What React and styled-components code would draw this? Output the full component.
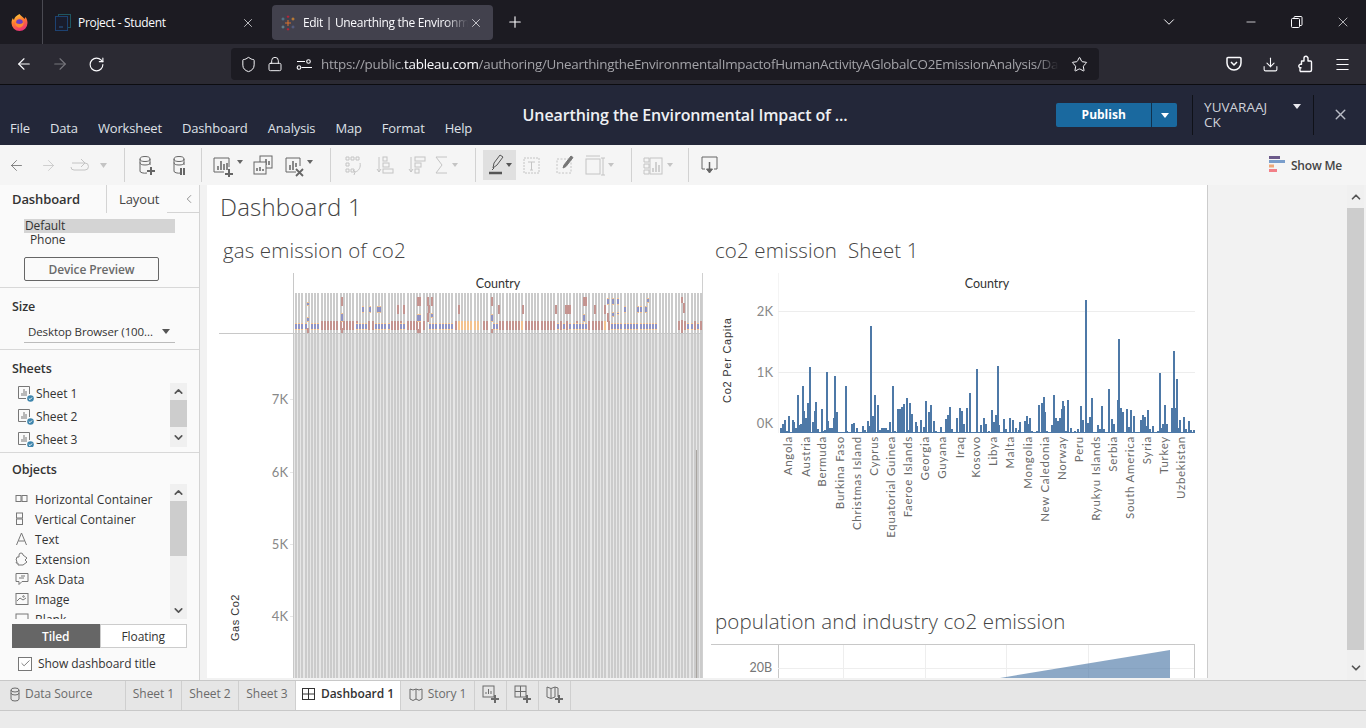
import React from 'react';
import styled, { createGlobalStyle } from 'styled-components';
import { ArrowLeft, ArrowRight, RotateCw, Lock, Star, Download, Menu, X, Plus, ChevronDown, ChevronUp, Minus, Shield, ChevronLeft, Check } from 'lucide-react';

const Global = createGlobalStyle`
  html, body { margin: 0; padding: 0; width: 1366px; height: 728px; overflow: hidden; background: #ebebeb; }
  * { box-sizing: border-box; }
  body { font-family: "Open Sans", "Noto Sans", sans-serif; }
`;
const Page = styled.div`width:1366px;height:728px;display:flex;flex-direction:column;overflow:hidden;`;

/* ---------- browser chrome ---------- */
const TabStrip = styled.div`height:44px;background:#1c1b22;display:flex;align-items:center;color:#fbfbfe;flex:none;`;
const FoxSlot = styled.div`width:43px;height:44px;border-right:1px solid #4a4a52;display:flex;align-items:center;justify-content:center;padding-right:3px;`;
const BrowserTab = styled.div`
  height:35px;margin-top:1px;display:flex;align-items:center;border-radius:4px;flex:none;
  width:${p => p.$w}px;margin-left:${p => p.$ml || 0}px;padding:0 10px 0 ${p => p.$pl}px;
  background:${p => p.$active ? '#42414d' : 'transparent'};gap:${p => p.$active ? 7 : 7}px;
`;
const TabTitle = styled.span`
  font-size:12px;white-space:nowrap;overflow:hidden;flex:1;letter-spacing:-0.32px;
  ${p => p.$fade && 'margin-right:-6px;mask-image:linear-gradient(90deg,#000 86%,transparent 100%);'}
`;
const WinControls = styled.div`margin-left:auto;display:flex;align-items:center;`;
const WinBtn = styled.div`width:${p => p.$w}px;display:flex;justify-content:center;`;
const NavBar = styled.div`height:41px;background:#2b2a33;border-bottom:1px solid #0c0c10;display:flex;align-items:center;flex:none;color:#fbfbfe;`;
const NavBtn = styled.div`width:36px;display:flex;justify-content:center;color:${p => p.$off ? '#77767d' : '#fbfbfe'};margin-left:${p => p.$ml || 0}px;`;
const UrlBar = styled.div`
  width:868px;height:32px;margin-left:117px;background:#1c1b22;border-radius:4px;display:flex;align-items:center;padding:0 8px;flex:none;
`;
const UrlIcon = styled.div`width:${p => p.$w}px;display:flex;justify-content:center;flex:none;color:#fbfbfe;margin-left:${p => p.$ml || 0}px;`;
const UrlText = styled.div`
  width:742px;margin-left:6px;font-size:13.4px;white-space:nowrap;overflow:hidden;color:#a3a3a8;letter-spacing:-0.26px;
  mask-image:linear-gradient(90deg,#000 97%,transparent 100%);
  b{font-weight:400;color:#fbfbfe;}
`;
const NavRight = styled.div`margin-left:auto;display:flex;align-items:center;padding-right:6px;`;

/* ---------- tableau header ---------- */
const AppHeader = styled.div`height:60px;background:#232739;display:flex;flex:none;position:relative;color:#e8e9ee;`;
const MenuRow = styled.div`display:flex;align-items:center;gap:20px;padding:26px 0 0 10px;width:523px;`;
const MenuItem = styled.span`font-size:13px;color:#dfe1e7;letter-spacing:-0.15px;`;
const WorkbookTitle = styled.div`width:533px;font-size:16px;font-weight:600;color:#eef0f3;padding-top:19px;letter-spacing:-0.12px;white-space:nowrap;`;
const PublishWrap = styled.div`display:flex;height:24px;margin:18px 0 0 1px;width:121px;border-radius:2px;overflow:hidden;`;
const PublishBtn = styled.div`width:96px;background:#1a699f;color:#fff;font-weight:700;font-size:12px;display:flex;align-items:center;justify-content:center;border-right:1px solid #10324e;padding-bottom:1px;`;
const PublishCaret = styled.div`flex:1;background:#1a699f;display:flex;align-items:center;justify-content:center;`;
const Tri = styled.span`
  display:block;width:0;height:0;border-left:${p => p.$s}px solid transparent;border-right:${p => p.$s}px solid transparent;
  border-top:${p => p.$s + 1}px solid ${p => p.$c};
`;
const UserBox = styled.div`
  margin:10px 0 10px 15px;width:122px;border-left:1px solid #0f1118;border-right:1px solid #0f1118;padding:5px 12px 5px 11px;display:flex;
  font-size:13.5px;line-height:15px;color:#cfd2da;justify-content:space-between;
`;
const UserCaret = styled(Tri)`margin-top:4px;`;
const CloseBox = styled.div`width:52px;display:flex;align-items:center;justify-content:center;color:#b9bcc6;padding-bottom:2px;`;

/* ---------- toolbar ---------- */
const Toolbar = styled.div`height:40px;background:#f5f5f5;display:flex;align-items:center;flex:none;`;
const ToolSep = styled.div`width:1px;height:34px;background:#d2d2d2;flex:none;margin-left:${p => p.$ml || 0}px;`;
const ToolBtn = styled.div`
  width:${p => p.$w || 32}px;height:30px;display:flex;align-items:center;justify-content:center;flex:none;margin-left:${p => p.$ml || 0}px;
  background:${p => p.$on ? '#e0e0e0' : 'transparent'};color:${p => p.$on ? '#555' : p.$off ? '#c4c4c4' : '#666'};
`;
const ShowMe = styled.div`margin-left:auto;display:flex;align-items:center;gap:6px;padding-right:24px;font-size:12px;font-weight:600;color:#444;letter-spacing:-0.2px;`;

/* ---------- main ---------- */
const Main = styled.div`height:495px;display:flex;flex:none;background:#f2f2f2;overflow:hidden;`;
const Side = styled.div`width:200px;background:#fafafa;border-right:1px solid #d4d4d4;flex:none;display:flex;flex-direction:column;color:#333;font-size:12px;`;
const SideTabs = styled.div`height:28px;display:flex;flex:none;border-bottom:1px solid #d4d4d4;`;
const SideTab = styled.div`
  height:28px;display:flex;align-items:center;font-size:13px;padding-left:${p => p.$pl}px;width:${p => p.$w}px;
  font-weight:${p => p.$on ? 600 : 400};color:${p => p.$on ? '#333' : '#444'};
  border-right:${p => p.$on ? '1px solid #d4d4d4' : 'none'};
  background:#fafafa;margin-bottom:${p => p.$on ? '-1px' : 0};letter-spacing:-0.1px;
`;
const TabCollapse = styled.div`margin-left:auto;display:flex;align-items:center;color:#666;padding-right:3px;`;
const Section = styled.div`
  flex:none;height:${p => p.$h}px;padding:${p => p.$p};position:relative;
  border-bottom:${p => p.$last ? 'none' : '1px solid #d8d8d8'};
`;
const SectionLabel = styled.div`font-size:12.5px;font-weight:600;color:#333;line-height:16px;padding-left:12px;letter-spacing:-0.1px;`;
const DeviceRow = styled.div`
  margin-left:24px;width:151px;height:14px;font-size:12px;line-height:14px;letter-spacing:-0.1px;
  background:${p => p.$on ? '#d4d4d4' : 'transparent'};padding-left:${p => p.$on ? 1 : 6}px;color:#333;
`;
const DeviceBtn = styled.div`
  margin:10px 0 0 24px;width:135px;height:24px;border:1px solid #666;border-radius:2px;display:flex;align-items:center;justify-content:center;
  color:#6a6a6a;font-size:12px;font-weight:600;letter-spacing:-0.1px;
`;
const SelectRow = styled.div`
  margin:7px 0 0 24px;width:151px;height:21px;border-bottom:1px solid #bbb;display:flex;align-items:center;justify-content:space-between;
  padding:0 5px 2px 4px;font-size:11.5px;white-space:nowrap;letter-spacing:-0.1px;
`;
const ListWrap = styled.div`display:flex;margin-top:${p => p.$mt}px;height:${p => p.$h}px;overflow:hidden;`;
const List = styled.div`width:170px;flex:none;overflow:hidden;padding-left:${p => p.$pl}px;padding-top:${p => p.$pt || 0}px;`;
const SheetRow = styled.div`height:23px;display:flex;align-items:center;gap:2px;font-size:12px;color:#333;letter-spacing:-0.05px;&:first-child{margin-top:-1px;}`;
const ObjectRow = styled.div`height:20px;display:flex;align-items:center;gap:6px;font-size:12px;color:#333;letter-spacing:0.05px;white-space:nowrap;`;
const VScroll = styled.div`width:${p => p.$w}px;flex:none;background:#f0f0f0;display:flex;flex-direction:column;`;
const ScrollEnd = styled.div`height:${p => p.$h}px;display:flex;align-items:center;justify-content:center;color:#555;flex:none;`;
const ScrollThumb = styled.div`height:${p => p.$h}px;background:#cdcdcd;flex:none;`;
const ScrollFill = styled.div`flex:1;`;
const ToggleRow = styled.div`display:flex;margin:5px 0 0 12px;width:175px;height:24px;`;
const ToggleBtn = styled.div`
  flex:1;display:flex;align-items:center;justify-content:center;font-size:12px;letter-spacing:-0.1px;
  background:${p => p.$on ? '#666' : '#fff'};color:${p => p.$on ? '#fff' : '#333'};font-weight:${p => p.$on ? 600 : 400};
  border:1px solid ${p => p.$on ? '#666' : '#ccc'};
`;
const CheckRow = styled.div`display:flex;align-items:center;gap:6px;margin:7px 0 0 18px;font-size:12px;color:#333;letter-spacing:-0.05px;`;
const CheckBox = styled.div`width:14px;height:14px;border:1px solid #777;background:#fff;display:flex;align-items:center;justify-content:center;color:#444;`;

const Gutter = styled.div`width:7px;flex:none;`;
const Canvas = styled.div`width:1000px;height:493px;flex:none;background:#fff;overflow:hidden;padding-left:12px;`;
const DashTitle = styled.div`height:44px;display:flex;align-items:center;font-size:24px;font-weight:300;color:#444;padding:0 0 2px 1px;letter-spacing:.2px;`;
const Columns = styled.div`display:flex;`;
const ChartCol = styled.div`width:${p => p.$w}px;flex:none;`;
const PanelTitle = styled.div`height:44px;display:flex;align-items:center;font-size:20.5px;font-weight:300;color:#444;padding:0 0 2px ${p => p.$pl}px;white-space:pre;letter-spacing:.12px;`;
const ChartSvg = styled.svg`display:block;`;
const Margin = styled.div`width:140px;height:493px;flex:none;border-left:1px solid #ccc;`;
const PageScroll = styled.div`width:17px;flex:none;background:#f0f0f0;display:flex;flex-direction:column;`;

/* ---------- sheet tabs ---------- */
const SheetBar = styled.div`height:31px;background:#e6e6e6;border-top:1px solid #c8c8c8;border-bottom:1px solid #c8c8c8;display:flex;flex:none;`;
const SheetTab = styled.div`
  height:29px;display:flex;align-items:center;justify-content:${p => p.$left ? 'flex-start' : 'center'};gap:${p => p.$left ? 4 : 5}px;font-size:12px;width:${p => p.$w}px;flex:none;
  padding:0 0 4px ${p => p.$left ? 9 : 0}px;
  border-right:1px solid #cfcfcf;color:${p => p.$on ? '#333' : '#6b6b6b'};background:${p => p.$on ? '#fff' : 'transparent'};
  font-weight:${p => p.$on ? 600 : 400};letter-spacing:-0.05px;
`;
const StatusBar = styled.div`flex:1;background:#ebebeb;`;

/* ---------- icons ---------- */
const S = ({ w = 20, h = 20, vb, children, sw = 1, fill = 'none' }) => (
  <svg width={w} height={h} viewBox={vb || `0 0 ${w} ${h}`} fill={fill} stroke="currentColor" strokeWidth={sw} style={{ overflow: 'visible', display: 'block' }}>{children}</svg>
);
const Caret = ({ x, y = 9 }) => <path d={`M${x} ${y}h6l-3 4z`} fill="currentColor" stroke="none" />;

const FoxLogo = () => (
  <svg width="17" height="18" viewBox="0 0 16 18">
    <defs>
      <linearGradient id="fx" x1="0.2" y1="0" x2="0.6" y2="1"><stop offset="0" stopColor="#ffd23f" /><stop offset=".45" stopColor="#ff7a2f" /><stop offset="1" stopColor="#ea2f7b" /></linearGradient>
    </defs>
    <path d="M8 1c1 2 4 3 5 5l1-2c1.500 2 2 4 2 6a8 8 0 0 1-16 0c0-2 .6-4 1.500-5 0 1 .5 1.500 1 2C3 4 5 2.500 8 1z" fill="url(#fx)" />
    <circle cx="8" cy="9.500" r="3.300" fill="#6a3fc4" />
    <path d="M3.500 9c1 1 2.500 2 4.500 2 2 0 3-1 4-2 .5 3-1.500 5.500-4 5.500S3 12 3.500 9z" fill="#ff8a30" />
  </svg>
);
const ProjectIcon = () => (
  <svg width="16" height="17" viewBox="0 0 16 17" fill="none">
    <rect x="3.500" y=".5" width="12" height="13" stroke="#1f5560" />
    <rect x=".5" y="2.500" width="12" height="14" stroke="#1d4272" fill="#191c2c" />
    <path d="M4 13h4" stroke="#2a5a92" />
  </svg>
);
const TableauLogo = () => (
  <svg width="16" height="16" viewBox="0 0 16 16" strokeWidth=".9">
    <path d="M8 5v6M5 8h6" stroke="#e8762b" />
    <path d="M3 2.500v3M1.500 4h3" stroke="#5b879b" />
    <path d="M13 2.500v3M11.500 4h3" stroke="#eb912b" />
    <path d="M3 10.500v3M1.500 12h3" stroke="#7099a6" />
    <path d="M13 10.500v3M11.500 12h3" stroke="#5c6692" />
    <path d="M8 .5v2.500M6.800 1.700h2.500" stroke="#c72035" />
    <path d="M8 13v2.500M6.800 14.300h2.500" stroke="#c72035" />
  </svg>
);
const Restore = () => (
  <S w={12} h={12}><rect x=".5" y="2.500" width="8" height="9" rx="1" /><path d="M3 2.500V1.500a1 1 0 0 1 1-1h6a1 1 0 0 1 1 1v7a1 1 0 0 1-1 1H8.500" /></S>
);
const Sliders = () => (
  <S w={15} h={11} sw={1.100}><path d="M0 2.500h8M4.500 8.500H15" /><circle cx="11.500" cy="2.500" r="1.800" /><circle cx="2" cy="8.500" r="1.800" /></S>
);
const Pocket = () => (
  <svg width="16" height="16" viewBox="0 0 16 16" fill="none" stroke="currentColor" strokeWidth="1.500"><path d="M2 1.500h12a1 1 0 0 1 1 1V7a7 7 0 0 1-14 0V2.500a1 1 0 0 1 1-1z" /><path d="M5 6l3 3 3-3" /></svg>
);
const ExtPuzzle = () => (
  <svg width="16" height="18" viewBox="0 0 16 18" fill="none" stroke="currentColor" strokeWidth="1.400" strokeLinejoin="round">
    <path d="M2 16.500h10a1.500 1.500 0 0 0 1.500-1.500V7a1 1 0 0 0-1-1H10V3.300a2 2 0 0 0-4 0V6H3.500v3.300H2a1.800 1.800 0 0 0 0 3.400h1.500" />
    <path d="M2 16.500V12.700" />
  </svg>
);
const Cyl = ({ x = 0 }) => <g transform={`translate(${x} 0)`}><ellipse cx="6" cy="5" rx="5" ry="2.500" /><path d="M1 5v12a5 2 0 0 0 7 2M11 5v6M1 8.500a5 2.500 0 0 0 10 0" /></g>;
const DataAdd = () => <S h={22} w={20}><Cyl x={2} /><path d="M14 13v8M10 17h8" strokeWidth="2" /></S>;
const DataPause = () => <S h={22} w={20}><Cyl x={4} /><path d="M12 14v7M15 14v7" strokeWidth="2" /></S>;
const NewSheet = () => (
  <S w={32} h={22}><path d="M15 18H5V4h15v9" /><path d="M9 16v-4M12 16V7M15 16v-6M18 16V9" strokeWidth="1.500" /><path d="M16 20h8M20 15v8" strokeWidth="2" /><Caret x={28} y={6} /></S>
);
const DupSheet = () => (
  <S w={24} h={22}><rect x="9" y="2" width="12" height="12" fill="#f5f5f5" /><path d="M12 11V8M15 11V5M18 11V7" strokeWidth="1.500" /><rect x="3" y="8" width="12" height="12" fill="#f5f5f5" /><path d="M6 17v-3M9 17v-4M12 17v-2" strokeWidth="1.500" /></S>
);
const ClearSheet = () => (
  <S w={32} h={22}><path d="M15 18H5V4h14v8" /><path d="M9 16v-5M12 16V7M15 13V9" strokeWidth="1.500" /><path d="M15 15l7 7M22 15l-7 7" strokeWidth="1.800" /><Caret x={26} y={6} /></S>
);
const Swap = () => (
  <S w={22} h={22}><path d="M4 3h3v3H4zM9 3h3v3H9zM14 3h3v3h-3zM4 9h3v3H4zM4 15h3v3H4zM9 15h3v3H9z" /><path d="M18 9c1 4-1 8-5 9" /><path d="M11 16l2 2-1 3" /></S>
);
const SortA = () => (
  <S w={22} h={22}><path d="M4 3v15M2 15l2 3 2-3" /><rect x="8" y="3" width="4" height="4" /><rect x="8" y="9" width="6" height="4" /><rect x="8" y="15" width="10" height="4" /></S>
);
const SortD = () => (
  <S w={22} h={22}><path d="M4 3v15M2 15l2 3 2-3" /><rect x="8" y="3" width="10" height="4" /><rect x="8" y="9" width="6" height="4" /><rect x="8" y="15" width="4" height="4" /></S>
);
const Sigma = () => <S w={32} h={22}><path d="M16 3H5l6 8-6 8h11" /><Caret x={21} y={9} /></S>;
const Pen = () => (
  <S w={30} h={24}><path d="M8 15l1-5 6-8 3 2-6 8zM7 17l2-2" /><path d="M4 20h13" strokeWidth="2.500" /><Caret x={21} y={10} /></S>
);
const LabelT = () => <S w={22} h={22}><rect x="3" y="4" width="15" height="15" strokeDasharray="2 1" /><path d="M7 8h7M10.500 8v8M9 16h3" /></S>;
const Fit = () => (
  <S w={22} h={22}><rect x="3" y="5" width="14" height="14" strokeDasharray="2 1.500" /><path d="M9 14l1-3 7-9 2 1.500-7 9z" fill="#777" stroke="#777" /></S>
);
const FixAxes = () => (
  <S w={32} h={22}><rect x="3" y="5" width="14" height="15" /><path d="M3 2h14M20 4v17M18 4h4M18 21h4" /><Caret x={25} y={9} /></S>
);
const ShowCards = () => (
  <S w={32} h={22}><path d="M3 4h5v4H3zM3 10h5v4H3zM3 16h5v4H3z" /><rect x="9" y="4" width="12" height="16" /><path d="M12 18v-4M15 18V8M18 18v-7" strokeWidth="1.500" /><Caret x={26} y={9} /></S>
);
const Share = () => (
  <S w={22} h={22}><path d="M6 15H3V3h15v12h-3" /><path d="M10.500 8v9" strokeWidth="1.500" /><path d="M7.500 15h6l-3 4z" fill="currentColor" /></S>
);
const ShowMeIcon = () => (
  <svg width="16" height="20" viewBox="0 0 16 20"><rect x="0" y="1" width="11" height="3" fill="#6c5a8a" /><rect x="0" y="5" width="16" height="3" fill="#7a9ecb" /><rect x="0" y="9.500" width="5" height="3" fill="#f0a878" /><rect x="0" y="14" width="8" height="3" fill="#f28088" /></svg>
);
const SheetIcon = () => (
  <svg width="16" height="16" viewBox="0 0 16 16" fill="none" stroke="#777" style={{ flex: 'none' }}>
    <path d="M8 12.500H.5V.5h11V8" /><path d="M4 10V7M6 10V3M8 10V5" />
    <circle cx="12.500" cy="12.500" r="3.300" fill="#3f86ad" stroke="none" /><path d="M10.800 12.500l1.200 1.200 2-2.200" stroke="#fff" />
  </svg>
);
const ObjIcon = ({ k }) => (
  <svg width="14" height="14" viewBox="0 0 14 14" fill="none" stroke="#777" style={{ flex: 'none', overflow: 'visible' }}>
    {k === 'h' && <><rect x="1" y="3.500" width="5" height="6" /><rect x="7" y="3.500" width="5" height="6" /></>}
    {k === 'v' && <><rect x="1.500" y="1" width="6" height="5" /><rect x="1.500" y="7" width="6" height="5.500" /></>}
    {k === 't' && <path d="M1.500 13L6.500 1l5 12M3.500 9h6" />}
    {k === 'e' && <path d="M2 5h2V3a2 2 0 0 1 4 0l4 3-2 2 2 2-4 3H3v-2H1l1-2-1-1z" />}
    {k === 'a' && <path d="M1 1.500h12v8H7l-3 3v-3H1zM4 6h5M6 4h4" />}
    {k === 'i' && <><rect x="1" y="1.500" width="12" height="11" /><path d="M2 9l3-3 3 2 3-2" /><circle cx="8.500" cy="4.500" r=".8" /></>}
    {k === 'b' && <rect x="1" y="2" width="12" height="11" />}
  </svg>
);
const SmallSheetAdd = ({ k }) => (
  <S w={20} h={20}>
    {k === 's' && <><rect x="2" y="2" width="11" height="11" /><path d="M5 10V8M7.500 10V5M10 10V7" /></>}
    {k === 'd' && <><rect x="2" y="2" width="11" height="11" /><path d="M2 7.500h11M7.500 2v11" /></>}
    {k === 'b' && <path d="M2 3l4 1.500L10 3v10l-4 1.500L2 13zM6 4.500v10M10 3l3 1v9" />}
    <path d="M10 15h8M14 11v8" strokeWidth="2" />
  </S>
);

/* ---------- chart data ---------- */
const TOP = [[212,475],[218,462],[224,450],[230,483],[237,438],[248,450],[253,455],[258,474],[264,375],[270,464],[273,462],[279,348],[283,424],[288,444],[295,399],[300,291],[309,455],[315,423],[318,396],[324,477],[336,417],[342,482],[345,480],[351,306],[355,453],[360,474],[366,474],[372,444],[375,318],[381,426],[396,485],[408,348],[411,484],[426,462],[432,459],[441,474],[447,485],[459,468],[465,480],[474,453],[477,468],[483,168],[489,438],[495,375],[504,405],[510,480],[516,474],[522,474],[528,474],[534,480],[540,456],[549,348],[555,482],[564,417],[570,417],[576,411],[582,402],[590,384],[594,480],[600,399],[606,432],[618,456],[621,468],[633,450],[642,472],[648,393],[657,426],[663,405],[672,453],[678,483],[684,486],[693,471],[708,447],[714,435],[720,411],[726,477],[741,444],[750,414],[756,423],[762,462],[771,414],[780,369],[786,486],[792,486],[801,297],[813,465],[822,444],[828,462],[838,484],[846,420],[852,456],[858,435],[864,288],[868,465],[882,447],[888,477],[900,444],[909,450],[918,474],[927,480],[930,456],[945,453],[951,438],[957,462],[960,444],[966,482],[975,486],[981,483],[987,405],[996,399],[1002,381],[1006,426],[1011,484],[1026,465],[1032,375],[1038,444],[1044,453],[1050,444],[1056,417],[1059,393],[1062,408],[1068,482],[1074,390],[1083,474],[1095,483],[1104,477],[1113,408],[1119,450],[1128,90],[1134,459],[1140,441],[1146,384],[1164,465],[1170,477],[1176,408],[1182,477],[1197,357],[1206,447],[1212,462],[1223,390],[1227,207],[1233,414],[1238,426],[1251,417],[1257,471],[1263,420],[1272,438],[1293,450],[1299,435],[1305,441],[1311,468],[1314,420],[1320,477],[1329,468],[1343,483],[1350,309],[1356,474],[1360,462],[1365,405],[1371,462],[1386,414],[1392,243],[1395,414],[1401,327],[1407,474],[1410,450],[1422,441],[1428,477],[1437,453],[1443,480],[1452,480]];
const COUNTRIES = [['Angola',235],['Austria',287],['Bermuda',337],['Burkina Faso',390],['Christmas Island',441],['Cyprus',492],['Equatorial Guinea',543],['Faeroe Islands',594],['Georgia',645],['Guyana',695],['Iraq',750],['Kosovo',797],['Libya',850],['Malta',900],['Mongolia',953],['New Caledonia',1005],['Norway',1056],['Peru',1107],['Ryukyu Islands',1158],['Serbia',1210],['South America',1260],['Syria',1311],['Turkey',1362],['Uzbekistan',1412]];
const SEGS = [[252,285,'b'],[300,330,'b'],[336,390,'r'],[402,438,'r'],[440,470,'b'],[472,500,'m'],[505,540,'b'],[545,570,'r'],[572,585,'b'],[590,615,'r'],[617,645,'r'],[655,665,'b'],[670,730,'b'],[735,745,'r'],[746,800,'o'],[815,835,'r'],[845,860,'b'],[865,935,'r'],[936,942,'o'],[945,1032,'r'],[1035,1060,'m'],[1070,1098,'m'],[1100,1128,'b'],[1130,1180,'r'],[1182,1188,'o'],[1195,1210,'m'],[1215,1300,'b'],[1305,1335,'b'],[1405,1470,'m']];
const MARKS = [[292,97,108,'b'],[292,140,155,'b'],[292,175,190,'r'],[394,80,108,'r'],[394,130,155,'b'],[394,175,190,'r'],[455,108,128,'b'],[478,108,128,'b'],[500,108,128,'b'],[507,108,128,'b'],[560,105,132,'r'],[578,105,132,'r'],[620,80,108,'r'],[626,80,108,'r'],[620,132,155,'b'],[626,132,155,'b'],[620,178,190,'r'],[626,178,190,'r'],[650,80,108,'r'],[664,80,108,'r'],[654,105,130,'r'],[650,130,155,'r'],[662,130,145,'b'],[745,105,132,'r'],[842,80,108,'r'],[842,132,155,'b'],[842,178,190,'r'],[865,105,132,'r'],[937,105,132,'r'],[1036,105,132,'r'],[1064,105,132,'r'],[1070,105,132,'r'],[1078,105,132,'r'],[1118,80,108,'r'],[1124,80,108,'r'],[1118,132,155,'b'],[1153,105,132,'r'],[1183,105,132,'r'],[1192,85,105,'b'],[1205,85,105,'b'],[1220,85,105,'b'],[1205,125,140,'b'],[1220,125,135,'b'],[1192,130,155,'r'],[1243,108,130,'b'],[1280,108,130,'b'],[1290,108,130,'b'],[1305,108,130,'b'],[1310,85,100,'b'],[1414,80,100,'r'],[1420,100,128,'r'],[1414,150,190,'r']];
const COLS = Array.from({ length: 128 }, (_, i) => 76 + Math.round(i * 3.19));
const zx = z => Math.round(210 + z / 3 - 219);
const zy = z => Math.round(270 + z / 3 - 273);
const colsIn = (a, b) => COLS.filter(x => x >= zx(a) - 1 && x <= zx(b));
const ROSE = '#c49490', OR = '#f3c38f', BL = '#8f94c6';

const Stack = ({ x, y0, y1, t }) => {
  if (t === 'r') return <rect x={x} y={y0} width="2" height={y1 - y0} fill={ROSE} />;
  if (t === 'o') return <rect x={x} y={y0} width="2" height={y1 - y0} fill={OR} />;
  const h = y1 - y0;
  return <g><rect x={x} y={y0} width="2" height={h} fill={OR} /><rect x={x} y={y0 + 1} width="2" height={Math.max(1, h - 2)} fill={BL} /></g>;
};

const GasChart = () => (
  <ChartSvg width="484" height="405" viewBox="0 0 484 405" shapeRendering="crispEdges">
    <rect x="75" y="61" width="409" height="344" fill="#e6e6e6" />
    {COLS.map(x => <rect key={x} x={x} y="20" width="2" height="385" fill="#cbcbcb" />)}
    <rect x="477" y="177" width="1" height="228" fill="#a9a5a0" />
    <rect x="0" y="60" width="484" height="1" fill="#c8c8c8" />
    <rect x="74" y="0" width="1" height="405" fill="#c8c8c8" />
    <rect x="483" y="0" width="1" height="405" fill="#d0d0d0" />
    {SEGS.flatMap(([a, b, t]) => colsIn(a, b).map(x => {
      const tt = t === 'm' ? (x % 2 ? 'r' : 'b') : t;
      const y0 = tt === 'b' ? zy(160) : zy(153);
      return <Stack key={`s${a}-${x}`} x={x} y0={y0} y1={zy(180)} t={tt} />;
    }))}
    {MARKS.map(([z, a, b, t], i) => <Stack key={i} x={zx(z)} y0={zy(a)} y1={zy(b)} t={t} />)}
    <g shapeRendering="auto" fontFamily="Lato, 'Open Sans', sans-serif">
      <text x="279" y="15" textAnchor="middle" fontSize="12.500" fill="#333">Country</text>
      {[['7K', 126], ['6K', 199], ['5K', 271], ['4K', 343]].map(([t, y]) => (
        <g key={t}><text x="69" y={y + 5} textAnchor="end" fontSize="13" fill="#888">{t}</text><rect x="71" y={y} width="3" height="1" fill="#e6e6e6" /></g>
      ))}
      <text transform="translate(20 368) rotate(-90)" fontSize="11" fill="#333" fontFamily="'Liberation Sans', sans-serif" letterSpacing=".5">Gas Co2</text>
    </g>
  </ChartSvg>
);

const PerCapita = () => (
  <ChartSvg width="492" height="327" viewBox="0 0 492 327">
    <g shapeRendering="crispEdges">
      <rect x="75" y="0" width="1" height="160" fill="#f4f4f4" />
      <rect x="75" y="38" width="417" height="1" fill="#ededed" />
      <rect x="75" y="99" width="417" height="1" fill="#ededed" />
      {TOP.map(([z, t]) => {
        const x = Math.round(710 + z / 3 - 703) - 1;
        const top = Math.round(270 + t / 3 - 273);
        return <rect key={z} x={x} y={top} width="2" height={160 - top} fill="#4e79a7" />;
      })}
      <rect x="77" y="159" width="415" height="1" fill="#4e79a7" />
    </g>
    <g fontFamily="Lato, 'Open Sans', sans-serif">
      <text x="284" y="15" textAnchor="middle" fontSize="12.500" fill="#333">Country</text>
      {[['2K', 43], ['1K', 104], ['0K', 155]].map(([t, y]) => <text key={t} x="70" y={y} textAnchor="end" fontSize="13" fill="#888">{t}</text>)}
      <text transform="translate(28 130) rotate(-90)" fontSize="11" fill="#333" fontFamily="'Liberation Sans', sans-serif" letterSpacing=".75">Co2 Per Capita</text>
      {COUNTRIES.map(([c, z]) => (
        <text key={c} transform={`translate(${710 + z / 3 - 703 + 4} 163) rotate(-90)`} textAnchor="end" fontSize="11.500" letterSpacing=".72" fill="#6a6a6a">{c}</text>
      ))}
    </g>
  </ChartSvg>
);

const PopChart = () => (
  <ChartSvg width="492" height="34" viewBox="0 0 492 34">
    <g shapeRendering="crispEdges">
      <rect x="8" y="0" width="484" height="1" fill="#c8c8c8" />
      <rect x="75" y="0" width="1" height="34" fill="#c8c8c8" />
      <rect x="491" y="0" width="1" height="34" fill="#c8c8c8" />
      {[140, 222, 303, 385].map(x => <rect key={x} x={x} y="1" width="1" height="33" fill="#eee" />)}
      <rect x="75" y="24" width="416" height="1" fill="#eee" />
    </g>
    <polygon points="297,34 467,6 467,34" fill="#4e79a7" opacity=".65" />
    <text x="69" y="28" textAnchor="end" fontSize="12.500" fill="#777" fontFamily="Lato, 'Open Sans', sans-serif">20B</text>
  </ChartSvg>
);

function SideObjects() {
  const items = [['h', 'Horizontal Container'], ['v', 'Vertical Container'], ['t', 'Text'], ['e', 'Extension'], ['a', 'Ask Data'], ['i', 'Image'], ['b', 'Blank']];
  return (
    <Section $h={227} $p="9px 0 0" $last>
      <SectionLabel>Objects</SectionLabel>
      <ListWrap $mt={6} $h={135}>
        <List $pl={15} $pt={5}>
          {items.map(([k, t]) => <ObjectRow key={k}><ObjIcon k={k} />{t}</ObjectRow>)}
        </List>
        <VScroll $w={17}>
          <ScrollEnd $h={17}><ChevronUp size={13} strokeWidth={3} /></ScrollEnd>
          <ScrollThumb $h={55} />
          <ScrollFill />
          <ScrollEnd $h={17}><ChevronDown size={13} strokeWidth={3} /></ScrollEnd>
        </VScroll>
      </ListWrap>
      <ToggleRow>
        <ToggleBtn $on>Tiled</ToggleBtn>
        <ToggleBtn>Floating</ToggleBtn>
      </ToggleRow>
      <CheckRow><CheckBox><Check size={11} strokeWidth={1.5} /></CheckBox>Show dashboard title</CheckRow>
    </Section>
  );
}

export default function App() {
  return (
    <Page>
      <Global />
      <TabStrip>
        <FoxSlot><FoxLogo /></FoxSlot>
        <BrowserTab $w={222} $pl={12}><ProjectIcon /><TabTitle>Project - Student</TabTitle><X size={14} strokeWidth={1.2} /></BrowserTab>
        <BrowserTab $active $w={221} $ml={7} $pl={8}><TableauLogo /><TabTitle $fade>Edit | Unearthing the Environmental Impact</TabTitle><X size={14} strokeWidth={1.2} /></BrowserTab>
        <NavBtn $ml={4}><Plus size={18} strokeWidth={1.5} /></NavBtn>
        <WinControls>
          <WinBtn $w={46}><ChevronDown size={18} strokeWidth={1.3} /></WinBtn>
          <WinBtn $w={36} />
          <WinBtn $w={46}><Minus size={14} strokeWidth={1.3} /></WinBtn>
          <WinBtn $w={46}><Restore /></WinBtn>
          <WinBtn $w={46}><X size={16} strokeWidth={1} /></WinBtn>
        </WinControls>
      </TabStrip>
      <NavBar>
        <NavBtn $ml={6}><ArrowLeft size={18} strokeWidth={1.5} /></NavBtn>
        <NavBtn $off><ArrowRight size={18} strokeWidth={1.5} /></NavBtn>
        <NavBtn><RotateCw size={17} strokeWidth={1.6} /></NavBtn>
        <UrlBar>
          <UrlIcon $w={18}><Shield size={17} strokeWidth={1.4} /></UrlIcon>
          <UrlIcon $w={36}><Lock size={16} strokeWidth={1.4} /></UrlIcon>
          <UrlIcon $w={22}><Sliders /></UrlIcon>
          <UrlText>https://public.<b>tableau.com</b>/authoring/UnearthingtheEnvironmentalImpactofHumanActivityAGlobalCO2EmissionAnalysis/Dashboard1</UrlText>
          <UrlIcon $w={24} $ml={8}><Star size={17} strokeWidth={1.4} /></UrlIcon>
        </UrlBar>
        <NavRight>
          <NavBtn><Pocket /></NavBtn>
          <NavBtn><Download size={17} strokeWidth={1.5} /></NavBtn>
          <NavBtn><ExtPuzzle /></NavBtn>
          <NavBtn><Menu size={17} strokeWidth={1.5} /></NavBtn>
        </NavRight>
      </NavBar>

      <AppHeader>
        <MenuRow>
          {['File', 'Data', 'Worksheet', 'Dashboard', 'Analysis', 'Map', 'Format', 'Help'].map(m => <MenuItem key={m}>{m}</MenuItem>)}
        </MenuRow>
        <WorkbookTitle>Unearthing the Environmental Impact of ...</WorkbookTitle>
        <PublishWrap>
          <PublishBtn>Publish</PublishBtn>
          <PublishCaret><Tri $s={4} $c="#fff" /></PublishCaret>
        </PublishWrap>
        <UserBox><span>YUVARAAJ<br />CK</span><UserCaret $s={4} $c="#e8e9ee" /></UserBox>
        <CloseBox><X size={17} strokeWidth={2} /></CloseBox>
      </AppHeader>

      <Toolbar>
        <ToolBtn><ArrowLeft size={17} strokeWidth={1.1} /></ToolBtn>
        <ToolBtn $off><ArrowRight size={17} strokeWidth={1.1} /></ToolBtn>
        <ToolBtn $off>
          <S w={24} h={16}><path d="M4 6h13a3 3 0 0 1 0 7H6a3 3 0 0 1-3-3" /><path d="M13 2l4 4-4 4" /></S>
        </ToolBtn>
        <ToolBtn $w={16} $off><S w={8} h={8}><path d="M0 2h7L3.500 7z" fill="currentColor" stroke="none" /></S></ToolBtn>
        <ToolSep $ml={12} />
        <ToolBtn $ml={6}><DataAdd /></ToolBtn>
        <ToolBtn><DataPause /></ToolBtn>
        <ToolSep $ml={6} />
        <ToolBtn $ml={7}><NewSheet /></ToolBtn>
        <ToolBtn $ml={6}><DupSheet /></ToolBtn>
        <ToolBtn $ml={2}><ClearSheet /></ToolBtn>
        <ToolSep $ml={17} />
        <ToolBtn $ml={6} $off><Swap /></ToolBtn>
        <ToolBtn $ml={1} $off><SortA /></ToolBtn>
        <ToolBtn $off><SortD /></ToolBtn>
        <ToolBtn $ml={-3} $off><Sigma /></ToolBtn>
        <ToolSep $ml={12} />
        <ToolBtn $w={33} $ml={7} $on><Pen /></ToolBtn>
        <ToolBtn $off><LabelT /></ToolBtn>
        <ToolBtn $ml={1} $off><Fit /></ToolBtn>
        <ToolBtn $ml={2} $off><FixAxes /></ToolBtn>
        <ToolSep $ml={16} />
        <ToolBtn $ml={9} $off><ShowCards /></ToolBtn>
        <ToolSep $ml={15} />
        <ToolBtn $ml={5}><Share /></ToolBtn>
        <ShowMe><ShowMeIcon />Show Me</ShowMe>
      </Toolbar>

      <Main>
        <Side>
          <SideTabs>
            <SideTab $on $w={107} $pl={12}>Dashboard</SideTab>
            <SideTab $w={60} $pl={12}>Layout</SideTab>
            <TabCollapse><ChevronLeft size={14} strokeWidth={1.2} /></TabCollapse>
          </SideTabs>
          <Section $h={75} $p="6px 0 0">
            <DeviceRow $on>Default</DeviceRow>
            <DeviceRow>Phone</DeviceRow>
            <DeviceBtn>Device Preview</DeviceBtn>
          </Section>
          <Section $h={62} $p="11px 0 0">
            <SectionLabel>Size</SectionLabel>
            <SelectRow>Desktop Browser (100...<Tri $s={4} $c="#555" /></SelectRow>
          </Section>
          <Section $h={103} $p="11px 0 0">
            <SectionLabel>Sheets</SectionLabel>
            <ListWrap $mt={6} $h={64}>
              <List $pl={18}>
                <SheetRow><SheetIcon />Sheet 1</SheetRow>
                <SheetRow><SheetIcon />Sheet 2</SheetRow>
                <SheetRow><SheetIcon />Sheet 3</SheetRow>
              </List>
              <VScroll $w={17}>
                <ScrollEnd $h={17}><ChevronUp size={13} strokeWidth={3} /></ScrollEnd>
                <ScrollThumb $h={27} />
                <ScrollFill />
                <ScrollEnd $h={20}><ChevronDown size={13} strokeWidth={3} /></ScrollEnd>
              </VScroll>
            </ListWrap>
          </Section>
          <SideObjects />
        </Side>
        <Gutter />
        <Canvas>
          <DashTitle>Dashboard 1</DashTitle>
          <Columns>
            <ChartCol $w={484}>
              <PanelTitle $pl={4}>gas emission of co2</PanelTitle>
              <GasChart />
            </ChartCol>
            <ChartCol $w={492}>
              <PanelTitle $pl={12}>co2 emission  Sheet 1</PanelTitle>
              <PerCapita />
              <PanelTitle $pl={12}>population and industry co2 emission</PanelTitle>
              <PopChart />
            </ChartCol>
          </Columns>
        </Canvas>
        <Margin />
        <PageScroll>
          <ScrollEnd $h={23}><ChevronUp size={14} strokeWidth={3} /></ScrollEnd>
          <ScrollThumb $h={442} />
          <ScrollFill />
          <ScrollEnd $h={24}><ChevronDown size={14} strokeWidth={3} /></ScrollEnd>
        </PageScroll>
      </Main>

      <SheetBar>
        <SheetTab $w={126} $left>
          <S w={12} h={14}><ellipse cx="6" cy="3" rx="4" ry="2" /><path d="M2 3v9a4 2 0 0 0 8 0V3M2 6a4 2 0 0 0 8 0" /></S>
          Data Source
        </SheetTab>
        <SheetTab $w={56}>Sheet 1</SheetTab>
        <SheetTab $w={57}>Sheet 2</SheetTab>
        <SheetTab $w={57}>Sheet 3</SheetTab>
        <SheetTab $w={105} $on>
          <S w={14} h={14}><rect x=".5" y="1.500" width="12" height="11" /><path d="M6.500 1.500v11M.5 7h12" /></S>
          Dashboard 1
        </SheetTab>
        <SheetTab $w={74}>
          <S w={14} h={14}><path d="M1 2l3 1 3-1 3 1 3-1v10l-3 1.500-3-1.500-3 1.500L1 12zM7 2v10" /></S>
          Story 1
        </SheetTab>
        <SheetTab $w={32}><SmallSheetAdd k="s" /></SheetTab>
        <SheetTab $w={32}><SmallSheetAdd k="d" /></SheetTab>
        <SheetTab $w={32}><SmallSheetAdd k="b" /></SheetTab>
      </SheetBar>
      <StatusBar />
    </Page>
  );
}
